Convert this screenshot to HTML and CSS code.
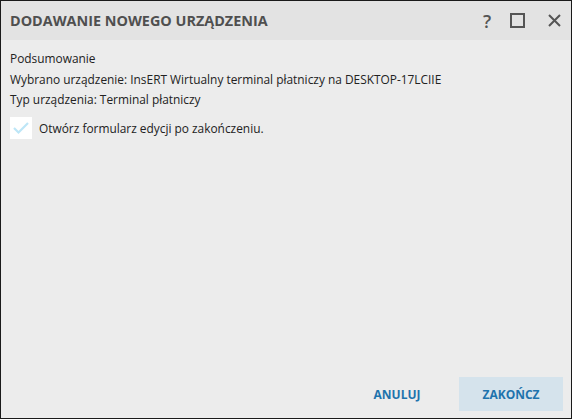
FILE: index.html
```html
<!DOCTYPE html>
<html lang="pl">
<head>
<meta charset="utf-8">
<link rel="stylesheet" href="styles.css">
</head>
<body>
<div class="dialog">
  <header class="titlebar">
    <h1 class="title">DODAWANIE NOWEGO URZĄDZENIA</h1>
    <div class="controls">
      <span class="ctl help">?</span>
      <svg class="ctl max" width="15" height="15" viewBox="0 0 15 15"><rect x="1" y="1" width="13" height="13" fill="none" stroke="#555" stroke-width="2"/></svg>
      <svg class="ctl close" width="13" height="13" viewBox="0 0 13 13"><path d="M1 1 L12 12 M12 1 L1 12" stroke="#555" stroke-width="2" fill="none"/></svg>
    </div>
  </header>
  <main class="content">
    <p class="line">Podsumowanie</p>
    <p class="line gap">Wybrano urządzenie: InsERT Wirtualny terminal płatniczy na DESKTOP-17LCIIE</p>
    <p class="line">Typ urządzenia: Terminal płatniczy</p>
    <label class="check">
      <span class="box"><svg width="18" height="14" viewBox="0 0 18 14"><path d="M2 7 L6.5 11.5 L16 2" stroke="#bde6f7" stroke-width="2.2" fill="none"/></svg></span>
      <span>Otwórz formularz edycji po zakończeniu.</span>
    </label>
  </main>
  <footer class="footer">
    <button class="btn cancel">ANULUJ</button>
    <button class="btn primary">ZAKOŃCZ</button>
  </footer>
</div>
</body>
</html>
```
FILE: styles.css
```css
* { box-sizing: border-box; }
html, body { margin: 0; padding: 0; }
body { width: 572px; height: 419px; overflow: hidden; font-family: "Open Sans", "Noto Sans", sans-serif; }
.dialog {
  width: 572px; height: 419px;
  border: 1px solid #1a1a1a;
  background: #ececec;
  display: flex; flex-direction: column;
}
.titlebar {
  height: 39px;
  background: #e3e3e3;
  display: flex; align-items: center; justify-content: space-between;
  padding: 0 10px 0 9px;
}
.title {
  margin: 0; font-size: 14.4px; font-weight: 700; color: #4f4f4f;
}
.controls { display: flex; align-items: center; }
.help { font-size: 18px; font-weight: 600; color: #555; width: 10px; text-align: center; margin-right: 18px; line-height: 18px; }
.max { margin-right: 23px; }
.content { flex: 1; padding: 8px 9px 0 9px; color: #222; font-size: 11.9px; }
.line { margin: 0; line-height: 20px; }
.gap { margin-top: 1px; }
.check { display: flex; align-items: center; gap: 7px; margin-top: 8px; }
.box { width: 22px; height: 22px; background: #fff; display: flex; align-items: center; justify-content: center; }
.footer { display: flex; justify-content: flex-end; padding: 0 8px 7px 0; }
.btn {
  font-family: inherit; font-size: 12px; font-weight: 700; color: #1e73ad;
  background: transparent; border: 0; height: 34px; width: 104px; padding: 0;
}
.cancel { margin-right: 10px; }
.primary { background: #d5e3ec; }
```
